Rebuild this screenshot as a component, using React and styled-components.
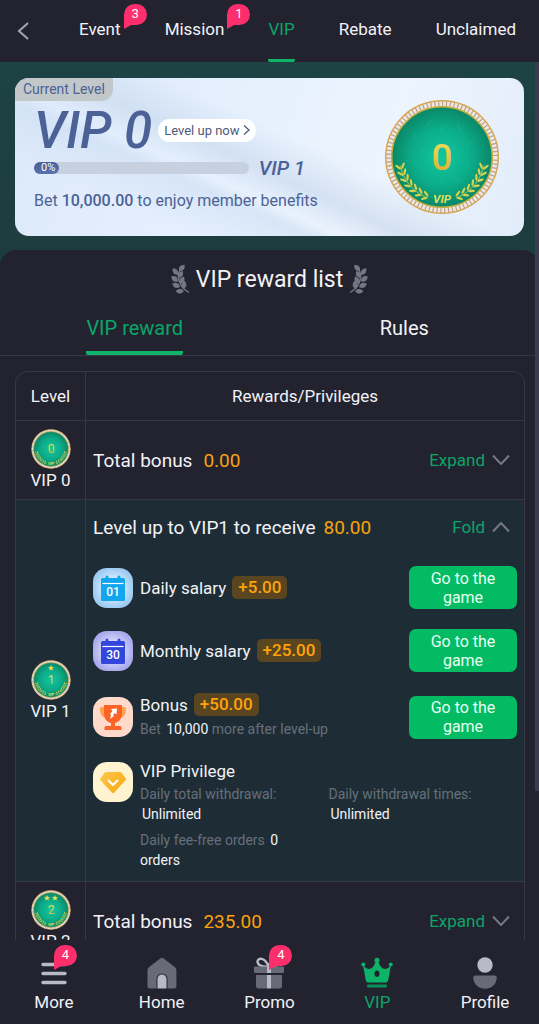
import React, { useState } from 'react';
import styled, { createGlobalStyle } from 'styled-components';

const topTabs = [
  { name: 'Event', badge: 3 },
  { name: 'Mission', badge: 1 },
  { name: 'VIP' },
  { name: 'Rebate' },
  { name: 'Unclaimed' }
];

const levels = [
  { level: 0, total: '0.00' },
  { level: 1, total: '80.00' },
  { level: 2, total: '235.00' }
];

const privileges = [
  { label: 'Daily total withdrawal:', value: 'Unlimited' },
  { label: 'Daily withdrawal times:', value: 'Unlimited' },
  { label: 'Daily fee-free orders', value: '0 orders' }
];

// x, y of the leaf base and its angle
const laurelLeaves = [
  [9, 8, -48],
  [8, 12, -128],
  [8, 15, -55],
  [8, 18.5, -142],
  [10, 21, -62],
  [10, 24, -158],
  [13, 26, -78],
  [14, 28, 178]
];

function Laurel({ flip }) {
  return (
    <LaurelSvg viewBox="0 0 20 32" $flip={flip} aria-hidden="true">
      {laurelLeaves.map(([x, y, angle]) => (
        <path key={y} d="M0 0Q4-5 8.500 0 4 5 0 0z" transform={`translate(${x} ${y}) rotate(${angle})`} />
      ))}
      <path d="M9.500 8C7 15 9 24 19 29.500" fill="none" stroke="#757682" strokeWidth="1.400" />
    </LaurelSvg>
  );
}

function Medal({ level, large }) {
  const id = `medal-${level}-${large ? 'l' : 's'}`;
  const stars = level === 1 ? [60] : level === 2 ? [48, 72] : [];
  const branch = [0, 1, 2, 3, 4, 5, 6].map((i) => {
    const a = ((168 - i * 9) * Math.PI) / 180;
    return { x: 60 + 44 * Math.cos(a), y: 60 + 44 * Math.sin(a), angle: 74 - i * 9 };
  });
  return (
    <MedalSvg viewBox="0 0 120 120" $large={large} role="img" aria-label={`VIP ${level} medal`}>
      <defs>
        <radialGradient id={`${id}-g`}>
          <stop offset="0" stopColor="#12c79f" />
          <stop offset="0.6" stopColor="#0bab88" />
          <stop offset="1" stopColor="#0a8767" />
        </radialGradient>
        <linearGradient id={`${id}-y`} x1="0" y1="0" x2="0" y2="1">
          <stop offset="0" stopColor="#f0e663" />
          <stop offset="1" stopColor="#d9a72a" />
        </linearGradient>
      </defs>
      <circle cx="60" cy="60" r="59" fill="#d6a751" />
      <circle cx="60" cy="60" r="57.5" fill="#b8a08a" />
      <circle cx="60" cy="60" r="55" fill="none" stroke="#efe6df" strokeWidth="5" strokeDasharray="2.8 1.2" />
      <circle cx="60" cy="60" r="52" fill={`url(#${id}-g)`} stroke="#c9b03f" strokeWidth="1.5" />
      <g stroke="#3bd2ae" strokeWidth="1" opacity="0.3">
        <path d="M30 35l4 7M48 22l-3 6M76 25l3 8M90 44l-5 5M28 64l6 3M40 78l4-5M74 80l4 6M84 66l5 4M60 28v6M38 50l3 5M58 86l4-3" />
      </g>
      {[false, true].map((flip) => (
        <g key={String(flip)} transform={flip ? 'translate(120 0) scale(-1 1)' : undefined} fill="#d9d24e">
          <path d="M17 69C20 84 29 95 44 102" fill="none" stroke="#d9d24e" strokeWidth="0.8" />
          {branch.map((b) => (
            <g key={b.angle} transform={`translate(${b.x} ${b.y}) rotate(${b.angle})`}>
              <ellipse cx="-1" cy="-2.500" rx="3.600" ry="1.200" transform="rotate(35)" />
              <ellipse cx="-1" cy="2.500" rx="3.600" ry="1.200" transform="rotate(-35)" />
            </g>
          ))}
        </g>
      ))}
      {stars.map((x) => (
        <path
          key={x}
          fill="#eedb58"
          transform={`translate(${x} 24)`}
          d="M0-9l2.600 5.800 6.400.6-4.800 4.200 1.400 6.200L0 4.600l-5.600 3.200 1.400-6.200-4.800-4.200 6.400-.6z"
        />
      ))}
      <text
        x="60"
        y="73"
        textAnchor="middle"
        fontFamily="Roboto, sans-serif"
        fontSize={large ? 38 : 36}
        fontWeight={large ? 500 : 400}
        fill={`url(#${id}-y)`}
      >
        {level}
      </text>
      <text
        x="60"
        y="108"
        textAnchor="middle"
        fontFamily="Roboto, sans-serif"
        fontSize="12"
        fontWeight="700"
        fontStyle="italic"
        fill="#dfe05a"
      >
        VIP
      </text>
    </MedalSvg>
  );
}

function Chevron({ up }) {
  return (
    <svg width="18" height="10" viewBox="0 0 18 10" fill="none" stroke="#777984" strokeWidth="2" aria-hidden="true">
      <path d={up ? 'M1 9.500L9 1l8 8.500' : 'M1 .5L9 9l8-8.500'} />
    </svg>
  );
}

function CalendarIcon({ day, color, edge, tint }) {
  return (
    <svg width="40" height="40" viewBox="0 0 40 40" aria-hidden="true">
      <defs>
        <radialGradient id={`cal-${day}`}>
          <stop offset="0.5" stopColor={tint} />
          <stop offset="1" stopColor={edge} />
        </radialGradient>
      </defs>
      <rect width="40" height="40" rx="14" fill={`url(#cal-${day})`} />
      <rect x="8" y="10" width="24" height="23" rx="1.500" fill={color} />
      <path d="M14 9v5M26 9v5" stroke={color} strokeWidth="3" strokeLinecap="round" />
      <path d="M9.500 15.500h21" stroke="#fff" strokeWidth="1.200" />
      <text x="20" y="28" textAnchor="middle" fontFamily="Roboto, sans-serif" fontSize="12" fontWeight="500" fill="#fff">
        {day}
      </text>
    </svg>
  );
}

function TrophyIcon() {
  return (
    <svg width="40" height="40" viewBox="0 0 40 40" aria-hidden="true">
      <rect width="40" height="40" rx="14" fill="#ffd9c9" />
      <path d="M12 10H8.500Q7 10 7 12c0 6 3 9 8 10zM28 10h3.500Q33 10 33 12c0 6-3 9-8 10z" fill="#ffa04d" />
      <path d="M11 8h18v8c0 6-3 9-7 10v3h5q1.500 0 1.500 1.500V33h-17v-2.500Q11.500 29 13 29h5v-3c-4-1-7-4-7-10z" fill="#fb6426" />
      <path d="M18 12l6-.5-.5 6-1.500-1.500-2 2 1 1-4 3 1-4-1-1 2.500-3z" fill="#fff" />
    </svg>
  );
}

function DiamondIcon() {
  return (
    <svg width="40" height="40" viewBox="0 0 40 40" aria-hidden="true">
      <defs>
        <linearGradient id="gem" x1="0" y1="0" x2="1" y2="1">
          <stop offset="0" stopColor="#ffc74b" />
          <stop offset="1" stopColor="#f5a70f" />
        </linearGradient>
      </defs>
      <rect width="40" height="40" rx="14" fill="#fff4cf" />
      <path d="M14 10h13q1 0 1.600.8l4 5.500q.7 1-.2 2L21.300 30.600q-1.200 1.300-2.400 0L7.700 18.400q-.9-1-.2-2l4-5.600Q12.500 10 14 10z" fill="url(#gem)" />
      <path d="M15.500 18.500l4.500 4.500 4.500-4.500" fill="none" stroke="#fff" strokeWidth="2" strokeLinecap="round" strokeLinejoin="round" />
    </svg>
  );
}

function MoreIcon() {
  return (
    <svg width="32" height="32" viewBox="0 0 32 32" aria-hidden="true">
      <path d="M5 7.500h22M5 16.500h22M5 25.500h22" stroke="#b9bac8" strokeWidth="3.400" strokeLinecap="round" />
    </svg>
  );
}

function HomeIcon() {
  return (
    <svg width="32" height="32" viewBox="0 0 32 32" aria-hidden="true">
      <path d="M14.600 1.200q1.400-1 2.800 0l11.600 9q1.400 1 1.400 2.800v16q0 2.500-2.500 2.500h-6.400V22a5.500 5.500 0 0 0-11 0v9.500H4Q1.500 31.500 1.500 29V13q0-1.800 1.400-2.800z" fill="#696a75" />
      <path d="M11.500 31.500V22a4.500 4.500 0 0 1 9 0v9.500z" fill="#b9bac8" />
    </svg>
  );
}

function GiftIcon() {
  return (
    <svg width="32" height="32" viewBox="0 0 32 32" aria-hidden="true">
      <path d="M15.500 9.500C9 10 4.500 8 4.500 4.500 5 .5 12 0 15.500 9.500 19 0 26 .5 26.500 4.500c0 3.500-4.500 5.500-11 5" fill="none" stroke="#b9bac8" strokeWidth="2.400" />
      <path d="M2 9.500h12v6.500H2.500Q1 16 1 14.500v-4q0-1 1-1zM18 9.500h12q1 0 1 1v4q0 1.500-1.500 1.500H18zM3 18h11v13.500H5.500Q3 31.500 3 29zM18 18h11v11q0 2.500-2.500 2.500H18z" fill="#696a75" />
      <path d="M14 9.500h4V16h-4zM14 18h4v13.500h-4z" fill="#b9bac8" />
    </svg>
  );
}

function CrownIcon() {
  return (
    <svg width="32" height="32" viewBox="0 0 32 32" fill="#0cb368" aria-hidden="true">
      <circle cx="16" cy="3.200" r="2.500" />
      <circle cx="2.300" cy="7.500" r="2" />
      <circle cx="29.700" cy="7.500" r="2" />
      <path d="M2 8c2.500 3.500 5.500 4.800 8 3.500 2.500-1.400 4.200-4.500 4.800-8h2.400c.6 3.500 2.300 6.600 4.800 8 2.500 1.300 5.500 0 8-3.500L27.300 23q-.4 2.500-2.800 2.500h-17Q5.100 25.500 4.700 23zM16 13.500c-1.500 0-2.600 1.600-2.600 3.300s1.100 3.300 2.600 3.300 2.600-1.600 2.600-3.300-1.100-3.300-2.600-3.300z" fillRule="evenodd" />
      <rect x="6" y="27.500" width="20" height="3" rx="1" fill="#0a8f58" />
    </svg>
  );
}

function ProfileIcon() {
  return (
    <svg width="32" height="32" viewBox="0 0 32 32" aria-hidden="true">
      <circle cx="16" cy="8" r="7.700" fill="#b9bac8" />
      <path d="M6.500 18.500h19q2.500 0 2.300 2.500C27 28 22 31.800 16 31.800S5 28 4.200 21Q4 18.500 6.500 18.500z" fill="#696a75" />
    </svg>
  );
}

const navItems = [
  { name: 'More', icon: MoreIcon, badge: 4 },
  { name: 'Home', icon: HomeIcon },
  { name: 'Promo', icon: GiftIcon, badge: 4 },
  { name: 'VIP', icon: CrownIcon, active: true },
  { name: 'Profile', icon: ProfileIcon }
];

const salaries = [
  {
    name: 'Daily salary',
    amount: '+5.00',
    icon: <CalendarIcon day="01" color="#12a5f0" edge="#9fcbf2" tint="#cfe8ff" />
  },
  {
    name: 'Monthly salary',
    amount: '+25.00',
    icon: <CalendarIcon day="30" color="#3246dc" edge="#a9abee" tint="#d3d5fb" />
  },
  { name: 'Bonus', amount: '+50.00', bet: '10,000', icon: <TrophyIcon /> }
];

function LevelDetails() {
  return (
    <StRewards>
      {salaries.map((item) => (
        <StReward key={item.name}>
          {item.icon}
          <StRewardText>
            <StRewardName>
              {item.name}
              <StAmount>{item.amount}</StAmount>
            </StRewardName>
            {item.bet && (
              <StNote>
                Bet <StNoteValue>{item.bet}</StNoteValue> more after level-up
              </StNote>
            )}
          </StRewardText>
          <StGameButton type="button">Go to the game</StGameButton>
        </StReward>
      ))}
      <StPrivilege>
        <DiamondIcon />
        <StRewardText>
          <StPrivilegeTitle>VIP Privilege</StPrivilegeTitle>
          <StPrivilegeGrid>
            {privileges.map((item) => (
              <StPrivilegeItem key={item.label}>
                {item.label} <StNoteValue>{item.value}</StNoteValue>
              </StPrivilegeItem>
            ))}
          </StPrivilegeGrid>
        </StRewardText>
      </StPrivilege>
    </StRewards>
  );
}

export default function App() {
  const [openLevel, setOpenLevel] = useState(1);

  return (
    <StApp>
      <GlobalStyle />
      <StHeader>
        <StBack type="button" aria-label="Back">
          <svg width="12" height="18" viewBox="0 0 12 18" fill="none" stroke="#a5a6b2" strokeWidth="2">
            <path d="M11 1L2 9l9 8" />
          </svg>
        </StBack>
        <StTopTabs>
          {topTabs.map((tab) => (
            <StTopTab key={tab.name} href={`#${tab.name.toLowerCase()}`} $active={tab.name === 'VIP'}>
              {tab.name}
              {tab.badge && <StTabBadge>{tab.badge}</StTabBadge>}
            </StTopTab>
          ))}
        </StTopTabs>
      </StHeader>

      <StBody>
        <StScroll>
          <StHero>
            <StCard>
              <StCardLeft>
                <StTag>Current Level</StTag>
                <StCardInfo>
                  <StLevelRow>
                    <StLevel>VIP 0</StLevel>
                    <StLevelUp type="button">
                      Level up now
                      <svg width="7" height="10" viewBox="0 0 7 10" fill="none" stroke="#4f5a7c" strokeWidth="1.300" aria-hidden="true">
                        <path d="M1 .5L6 5 1 9.500" />
                      </svg>
                    </StLevelUp>
                  </StLevelRow>
                  <StProgressRow>
                    <StTrack>
                      <StFill>0%</StFill>
                    </StTrack>
                    <StNextLevel>VIP 1</StNextLevel>
                  </StProgressRow>
                  <StBet>
                    Bet <b>10,000.00</b> to enjoy member benefits
                  </StBet>
                </StCardInfo>
              </StCardLeft>
              <Medal level={0} large />
            </StCard>
          </StHero>

          <StPanel>
            <StTitle>
              <Laurel />
              <h1>VIP reward list</h1>
              <Laurel flip />
            </StTitle>
            <StTabs>
              <StTab type="button" $active>
                <span>VIP reward</span>
              </StTab>
              <StTab type="button">
                <span>Rules</span>
              </StTab>
            </StTabs>

            <StTable>
              <thead>
                <tr>
                  <StLevelHead scope="col">Level</StLevelHead>
                  <StHead scope="col">Rewards/Privileges</StHead>
                </tr>
              </thead>
              <tbody>
                {levels.map(({ level, total }) => {
                  const open = level === openLevel;
                  return (
                    <StRow key={level} $open={open}>
                      <StLevelCell>
                        <Medal level={level} />
                        <StLevelName>VIP {level}</StLevelName>
                      </StLevelCell>
                      <StCell>
                        <StSummary $open={open}>
                          <span>{open ? `Level up to VIP${level} to receive` : 'Total bonus'}</span>
                          <StTotal>{total}</StTotal>
                          <StToggle type="button" aria-expanded={open} onClick={() => setOpenLevel(open ? null : level)}>
                            {open ? 'Fold' : 'Expand'}
                            <Chevron up={open} />
                          </StToggle>
                        </StSummary>
                        {open && <LevelDetails />}
                      </StCell>
                    </StRow>
                  );
                })}
              </tbody>
            </StTable>
          </StPanel>
        </StScroll>
        <StThumb />
      </StBody>

      <StNav>
        {navItems.map(({ name, icon: Icon, badge, active }) => (
          <StNavItem key={name} href={`#${name.toLowerCase()}`} $active={active}>
            <Icon />
            {name}
            {badge && <StNavBadge>{badge}</StNavBadge>}
          </StNavItem>
        ))}
      </StNav>
    </StApp>
  );
}

const GlobalStyle = createGlobalStyle`
  * {
    box-sizing: border-box;
  }

  body {
    margin: 0;
    background: #22232f;
    color: #f2f2f7;
    font-family: Roboto, 'Liberation Sans', sans-serif;
  }

  button {
    border: 0;
    padding: 0;
    background: none;
    color: inherit;
    font: inherit;
    cursor: pointer;
  }

  a {
    color: inherit;
    text-decoration: none;
  }

  svg {
    display: block;
    flex-shrink: 0;
  }
`;

const StApp = styled.div`
  display: flex;
  flex-direction: column;
  height: 100vh;
`;

const StHeader = styled.header`
  display: flex;
  height: 62px;
`;

const StBack = styled.button`
  width: 48px;
  padding-left: 17px;
`;

const StTopTabs = styled.nav`
  display: flex;
  flex: 1;
  justify-content: space-between;
  padding: 0 23px 0 31px;
`;

const StTopTab = styled.a`
  position: relative;
  font-size: 17px;
  line-height: 59px;
  color: ${({ $active }) => ($active ? '#0ba56a' : '#f2f2f7')};
  border-bottom: 3px solid ${({ $active }) => ($active ? '#10b36a' : 'transparent')};
  border-radius: 2px;
`;

const StBadge = styled.span`
  position: absolute;
  width: 23px;
  height: 21px;
  border-radius: 11px 11px 11px 0;
  background: #fc2e6c;
  color: #fff;
  font-size: 13px;
  line-height: 20px;
  text-align: center;

  &::after {
    content: '';
    position: absolute;
    left: 0;
    top: 20px;
    border-top: 5px solid #fc2e6c;
    border-right: 9px solid transparent;
  }
`;

const StTabBadge = styled(StBadge)`
  left: calc(100% + 3px);
  top: 4px;
`;

const StNavBadge = styled(StBadge)`
  left: 50%;
  top: 5px;
`;

const StBody = styled.main`
  position: relative;
  flex: 1;
  min-height: 0;
`;

const StScroll = styled.div`
  height: 100%;
  overflow-y: auto;
  scrollbar-width: none;
`;

const StThumb = styled.div`
  position: absolute;
  top: 0;
  right: 0;
  width: 4px;
  height: 83%;
  background: #3b3c4d;
`;

const StHero = styled.section`
  padding: 16px 15px 30px;
  margin-bottom: -16px;
  background: linear-gradient(#1d4344, #1d3c3e);
`;

const StCard = styled.div`
  display: flex;
  align-items: center;
  border-radius: 14px;
  overflow: hidden;
  padding-right: 24px;
  background:
    linear-gradient(205deg, transparent 42%, #c9d9eeaa 54%, transparent 62%),
    linear-gradient(24deg, transparent 20%, #cfdff4aa 34%, transparent 38%),
    linear-gradient(110deg, #dce9fa, #e6f1fe 45%, #edf4fd 70%, #e2ecfa);
`;

const StCardLeft = styled.div`
  flex: 1;
  min-width: 0;
  padding-bottom: 23px;
  color: #4c6296;
`;

const StTag = styled.div`
  width: fit-content;
  padding: 0 8px;
  border-radius: 0 0 12px 0;
  background: #c2c7c9;
  font-size: 14px;
  line-height: 23px;
`;

const StCardInfo = styled.div`
  padding: 0 79px 0 19px;
`;

const StLevelRow = styled.div`
  display: flex;
  align-items: center;
  gap: 6px;
  height: 58px;
  white-space: nowrap;
`;

const StLevel = styled.div`
  font-size: 51px;
  font-weight: 500;
  font-style: italic;
`;

const StLevelUp = styled.button`
  display: flex;
  align-items: center;
  gap: 3px;
  height: 23px;
  padding: 0 6px;
  border-radius: 12px;
  background: #fff;
  color: #4f5a7c;
  font-size: 13px;
`;

const StProgressRow = styled.div`
  display: flex;
  align-items: center;
  gap: 10px;
  height: 18px;
`;

const StTrack = styled.div`
  flex: 1;
  height: 12px;
  border-radius: 6px;
  background: #c6d0de;
`;

const StFill = styled.div`
  width: fit-content;
  padding: 0 4px 0 7px;
  border-radius: 6px;
  background: linear-gradient(#4a5f97, #5872ac);
  color: #fff;
  font-size: 11px;
  line-height: 12px;
`;

const StNextLevel = styled.div`
  font-size: 20px;
  font-weight: 500;
  font-style: italic;
  white-space: nowrap;
`;

const StBet = styled.div`
  margin-top: 12px;
  font-size: 16px;
  line-height: 24px;
  white-space: nowrap;

  b {
    font-weight: 500;
  }
`;

const MedalSvg = styled.svg`
  width: ${({ $large }) => ($large ? '116px' : '40px')};
  height: ${({ $large }) => ($large ? '116px' : '40px')};
  margin: 0 auto;
`;

const StPanel = styled.section`
  position: relative;
  border-radius: 16px 16px 0 0;
  background: #22232f;
`;

const StTitle = styled.div`
  display: flex;
  align-items: center;
  justify-content: center;
  gap: 6px;
  height: 58px;

  h1 {
    margin: 0;
    font-size: 23px;
    font-weight: 400;
  }
`;

const LaurelSvg = styled.svg`
  width: 20px;
  height: 32px;
  fill: #757682;
  transform: ${({ $flip }) => ($flip ? 'scaleX(-1)' : 'none')};
`;

const StTabs = styled.div`
  display: flex;
  border-bottom: 1px solid #373846;
`;

const StTab = styled.button`
  flex: 1;
  height: 47px;
  font-size: 20px;
  color: ${({ $active }) => ($active ? '#0ba56a' : '#f2f2f7')};

  span {
    display: inline-block;
    height: 47px;
    line-height: 40px;
    border-bottom: 4px solid ${({ $active }) => ($active ? '#10b36a' : 'transparent')};
    border-radius: 2px;
  }
`;

const StTable = styled.table`
  width: calc(100% - 29px);
  margin: 15px 14px 0 15px;
  border: 1px solid #373846;
  border-radius: 12px;
  border-spacing: 0;
`;

const StHead = styled.th`
  height: 48px;
  padding: 0;
  font-size: 17px;
  font-weight: 400;
`;

const StLevelHead = styled(StHead)`
  width: 70px;
  border-right: 1px solid #373846;
`;

const StRow = styled.tr`
  background: ${({ $open }) => ($open ? '#1e2d35' : 'transparent')};
`;

const StCell = styled.td`
  height: 79px;
  padding: 0 7px;
  border-top: 1px solid #373846;
`;

const StLevelCell = styled(StCell)`
  padding: 0;
  border-right: 1px solid #373846;
  text-align: center;
`;

const StLevelName = styled.div`
  font-size: 17px;
  line-height: 22px;
`;

const StSummary = styled.div`
  display: flex;
  align-items: center;
  gap: ${({ $open }) => ($open ? '8px' : '11px')};
  height: 54px;
  font-size: 19px;
  white-space: nowrap;
`;

const StTotal = styled.span`
  color: #f9a20d;
`;

const StToggle = styled.button`
  display: flex;
  align-items: center;
  gap: 7px;
  margin-left: auto;
  padding-right: 7px;
  font-size: 17px;
  color: #0ba56a;
`;

const StRewards = styled.div`
  display: flex;
  flex-direction: column;
  gap: 20px;
  padding: 12px 0 11px;
`;

const StReward = styled.div`
  display: flex;
  align-items: center;
  gap: 7px;
`;

const StPrivilege = styled(StReward)`
  align-items: flex-start;
`;

const StRewardText = styled.div`
  flex: 1;
`;

const StRewardName = styled.div`
  display: flex;
  align-items: center;
  gap: 6px;
  height: 25px;
  font-size: 17px;
`;

const StAmount = styled.span`
  padding: 0 6px;
  border-radius: 5px;
  background: #5a4521;
  color: #ffa30a;
  font-weight: 500;
  line-height: 23px;
`;

const StNote = styled.div`
  font-size: 14px;
  line-height: 25px;
  color: #66707b;
`;

const StNoteValue = styled.span`
  margin-left: 2px;
  color: #f2f2f7;
`;

const StGameButton = styled.button`
  width: 108px;
  height: 43px;
  padding: 0 16px;
  border-radius: 7px;
  background: #03bb62;
  color: #e8fff2;
  font-size: 16px;
  line-height: 19px;
`;

const StPrivilegeTitle = styled.div`
  font-size: 17px;
  line-height: 18px;
`;

const StPrivilegeGrid = styled.div`
  display: grid;
  grid-template-columns: 1fr 1fr;
  row-gap: 6px;
  margin-top: 4px;
`;

const StPrivilegeItem = styled.div`
  padding-right: 28px;
  font-size: 14px;
  line-height: 20px;
  color: #66707b;
`;

const StNav = styled.nav`
  display: flex;
  height: 84px;
  background: #22232f;
`;

const StNavItem = styled.a`
  position: relative;
  display: flex;
  flex: 1;
  flex-direction: column;
  align-items: center;
  gap: 2px;
  padding-top: 17px;
  font-size: 17px;
  line-height: 22px;
  color: ${({ $active }) => ($active ? '#0ba56a' : '#f2f2f7')};
`;
